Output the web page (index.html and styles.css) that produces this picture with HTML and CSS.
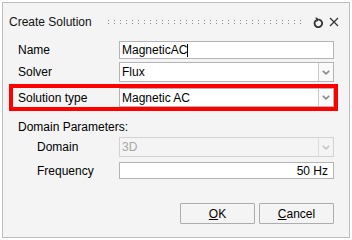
FILE: index.html
```html
<!DOCTYPE html>
<html lang="en">
<head>
    <meta charset="UTF-8">
    <title>Create Solution</title>
    <link rel="stylesheet" href="styles.css">
</head>
<body>
    <div class="window">
        <div class="titlebar">
            <span class="title">Create Solution</span>
            <svg class="grip" width="194" height="5" viewBox="0 0 194 5">
                <defs>
                    <pattern id="dots" width="6" height="3" patternUnits="userSpaceOnUse">
                        <rect width="1" height="1" fill="#8e8e8e"/>
                    </pattern>
                </defs>
                <rect width="194" height="5" fill="url(#dots)"/>
            </svg>
            <svg class="icon-reset" width="11" height="12" viewBox="0 0 11 12">
                <path d="M3.2 4.2 A3.8 3.8 0 1 0 6 3.6" fill="none" stroke="#333" stroke-width="1.8"/>
                <path d="M2.5 1 L6.6 3.6 L3.6 6 Z" fill="#333"/>
            </svg>
            <svg class="icon-close" width="10" height="10" viewBox="0 0 10 10">
                <path d="M1 1 L9 9 M9 1 L1 9" stroke="#333" stroke-width="1.2"/>
            </svg>
        </div>

        <div class="form">
            <div class="row row-name">
                <label>Name</label>
                <div class="textbox">MagneticAC<span class="caret"></span></div>
            </div>
            <div class="row row-solver">
                <label>Solver</label>
                <div class="combo">
                    <span class="combo-text">Flux</span>
                    <span class="combo-btn"><svg width="8" height="5" viewBox="0 0 8 5"><path d="M0.8 0.8 L4 3.8 L7.2 0.8" fill="none" stroke="#8a8a8a" stroke-width="1.6"/></svg></span>
                </div>
            </div>
            <div class="row row-highlight">
                <label>Solution type</label>
                <div class="combo combo-short">
                    <span class="combo-text">Magnetic AC</span>
                    <span class="combo-btn"><svg width="8" height="5" viewBox="0 0 8 5"><path d="M0.8 0.8 L4 3.8 L7.2 0.8" fill="none" stroke="#8a8a8a" stroke-width="1.6"/></svg></span>
                </div>
            </div>

            <div class="group-label">Domain Parameters:</div>

            <div class="row row-indent row-domain">
                <label>Domain</label>
                <div class="combo disabled">
                    <span class="combo-text">3D</span>
                    <span class="combo-btn"><svg width="8" height="5" viewBox="0 0 8 5"><path d="M0.8 0.8 L4 3.8 L7.2 0.8" fill="none" stroke="#c4c4c4" stroke-width="1.6"/></svg></span>
                </div>
            </div>
            <div class="row row-indent row-freq">
                <label>Frequency</label>
                <div class="textbox textbox-right">50 Hz</div>
            </div>

            <div class="buttons">
                <button class="btn"><u>O</u>K</button>
                <button class="btn"><u>C</u>ancel</button>
            </div>
        </div>
    </div>
</body>
</html>
```

FILE: styles.css
```css
body {
    margin: 0;
    padding: 0;
    background-color: #fff;
    font-family: "Liberation Sans", Arial, sans-serif;
    font-size: 12px;
    color: #000;
}

.window {
    margin: 2px;
    width: 348px;
    height: 236px;
    box-sizing: border-box;
    border: 1px solid #bdbdbd;
    background-color: #f4f4f4;
}

.titlebar {
    height: 38px;
    display: flex;
    align-items: center;
    padding: 0 0 0 6px;
}

.title {
    font-size: 12px;
    color: #111;
}

.grip {
    display: block;
    margin: 1px 0 0 16px;
}

.icon-reset {
    margin-left: 11px;
    margin-top: -1px;
}

.icon-close {
    margin-left: 5px;
}

.form {
    padding: 0 15px;
}

.row {
    display: grid;
    grid-template-columns: 101px 1fr;
    align-items: center;
}

.row label {
    white-space: nowrap;
}

.row-indent label {
    padding-left: 19px;
}

.row-solver {
    margin-top: 3px;
}

.row-highlight {
    margin: 2px -4px 0 -9px;
    border: 4px solid #ff0000;
    padding-left: 5px;
}

.row-domain {
    margin-top: 3px;
}

.row-freq {
    margin-top: 5px;
}

.textbox {
    height: 18px;
    box-sizing: border-box;
    border: 1px solid #b4b4b4;
    background-color: #fff;
    padding: 0 2px;
    line-height: 16px;
    display: flex;
    align-items: center;
}

.textbox-right {
    justify-content: flex-end;
    padding-right: 5px;
    height: 17px;
}

.caret {
    display: inline-block;
    width: 1px;
    height: 13px;
    background-color: #000;
}

.combo {
    height: 20px;
    box-sizing: border-box;
    border: 1px solid #b4b4b4;
    background-color: #fff;
    display: flex;
    align-items: stretch;
}

.combo-short {
    height: 19px;
}

.combo-text {
    flex: 1;
    padding-left: 2px;
    display: flex;
    align-items: center;
}

.combo-btn {
    width: 14px;
    border-left: 1px solid #c8c8c8;
    background-color: #fafafa;
    display: flex;
    align-items: center;
    justify-content: center;
}

.combo.disabled {
    border-color: #d2d2d2;
    background-color: #f4f4f4;
}

.combo.disabled .combo-text {
    color: #a7a7a7;
}

.combo.disabled .combo-btn {
    border-left-color: #dcdcdc;
    background-color: #f4f4f4;
}

.group-label {
    margin-top: 9px;
    height: 14px;
    line-height: 14px;
}

.buttons {
    display: flex;
    justify-content: flex-end;
    gap: 4px;
    margin-top: 24px;
}

.btn {
    width: 75px;
    height: 21px;
    box-sizing: border-box;
    border: 1px solid #adadad;
    border-radius: 1px;
    background-color: #f4f4f4;
    font-family: "Liberation Sans", Arial, sans-serif;
    font-size: 12px;
    color: #000;
    padding: 0;
}
```
